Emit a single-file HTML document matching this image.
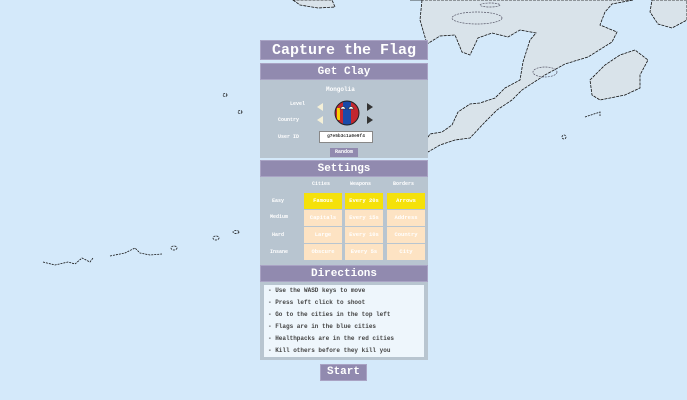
<!DOCTYPE html>
<html><head><style>
*{margin:0;padding:0;box-sizing:border-box}
body{width:687px;height:400px;overflow:hidden;background:#d4e9fa;position:relative;font-family:"Liberation Mono",monospace;font-weight:bold}
svg.map{position:absolute;left:0;top:0}
.abs{position:absolute}
.hdr{position:absolute;left:260px;width:168px;background:#918aaf;color:#fff;text-align:center;border:1px solid #a9a3c4}
.t{font-size:7px;color:#fff;position:absolute}
.cell{position:absolute;width:38px;height:16px;font-size:5.5px;color:#fff;text-align:center;line-height:16px;background:#fde3c3}
.y{background:#f5e10a}
.dir{font-size:6px;color:#444;position:absolute;left:268px}
</style></head><body>
<svg class="map" width="687" height="400">
<g fill="#d9e3ea" stroke="#111" stroke-width="0.8" stroke-dasharray="3,1">
<path d="M293,0 L300,5 L318,8 L335,7 L332,0Z"/>
<path d="M410,0 L422,0 L420,20 L427,44 L440,36 L455,35 L462,52 L470,55 L478,38 L492,33 L508,37 L520,30 L536,33 L530,40 L523,62 L520,80 L505,88 L495,98 L480,103 L470,104 L458,112 L452,125 L442,132 L430,134 L423,145 L428,152 L440,145 L455,140 L470,138 L485,122 L497,110 L512,100 L522,90 L545,75 L565,64 L588,57 L612,42 L617,32 L600,25 L605,12 L612,4 L633,0Z"/>
<path d="M652,0 L687,0 L687,20 L672,28 L658,24 L650,12Z"/>
<path d="M590,80 L605,65 L620,55 L635,50 L648,60 L640,75 L640,88 L625,95 L600,100 L592,95Z"/>
</g>
<g fill="none" stroke="#556" stroke-width="0.7" stroke-dasharray="2,1">
<ellipse cx="477" cy="18" rx="25" ry="6"/><ellipse cx="545" cy="72" rx="12" ry="5"/><ellipse cx="490" cy="5" rx="10" ry="2"/>
</g>
<g fill="none" stroke="#111" stroke-width="0.8" stroke-dasharray="2,1">
<path d="M43,262 L55,265 L68,262 L75,264 L82,258 L90,262 L93,258"/>
<path d="M110,256 L125,253 L135,248 L140,253 L150,255 L162,254"/>
<ellipse cx="174" cy="248" rx="3" ry="2"/><ellipse cx="216" cy="238" rx="3" ry="2"/><ellipse cx="236" cy="232" rx="3" ry="1.5"/>
<ellipse cx="225" cy="95" rx="2" ry="1.5"/><ellipse cx="240" cy="112" rx="2" ry="1.5"/><ellipse cx="564" cy="137" rx="2" ry="2"/>
<path d="M585,117 L600,112 L600,116"/>
</g>
</svg>

<div class="hdr" style="top:40px;height:20px;font-size:15px;line-height:19px">Capture the Flag</div>
<div class="hdr" style="top:63px;height:17px;font-size:11px;line-height:16px">Get Clay</div>
<div class="abs" style="left:260px;top:80px;width:168px;height:78px;background:#b8c5d0"></div>
<div class="t" style="left:326px;top:86px;font-size:6px">Mongolia</div>
<div class="t" style="left:290px;top:101px;font-size:5px">Level</div>
<div class="t" style="left:278px;top:117px;font-size:5px">Country</div>
<div class="t" style="left:278px;top:134px;font-size:5px">User ID</div>
<div class="abs" style="left:317px;top:103px;width:0;height:0;border-top:4px solid transparent;border-bottom:4px solid transparent;border-right:6px solid #f4f0d8"></div>
<div class="abs" style="left:317px;top:116px;width:0;height:0;border-top:4px solid transparent;border-bottom:4px solid transparent;border-right:6px solid #f4f0d8"></div>
<div class="abs" style="left:367px;top:103px;width:0;height:0;border-top:4px solid transparent;border-bottom:4px solid transparent;border-left:6px solid #333"></div>
<div class="abs" style="left:367px;top:116px;width:0;height:0;border-top:4px solid transparent;border-bottom:4px solid transparent;border-left:6px solid #333"></div>
<svg class="abs" style="left:334px;top:100px" width="26" height="26">
<defs><clipPath id="c"><circle cx="13" cy="13" r="12"/></clipPath></defs>
<g clip-path="url(#c)"><rect width="26" height="26" fill="#c4272f"/><rect x="9" width="8" height="26" fill="#1a4aa8"/><rect x="3" y="8" width="3" height="12" fill="#f9cf02"/></g>
<circle cx="13" cy="13" r="12" fill="none" stroke="#222" stroke-width="1"/>
<path d="M6,9 Q9,4 12,9Z M14,9 Q17,4 20,9Z" fill="#fff" stroke="#222" stroke-width="0.6"/>
</svg>
<div class="abs" style="left:319px;top:131px;width:54px;height:12px;background:#fff;border:1px solid #888;font-size:4.5px;color:#333;text-align:center;line-height:10px">g7e5b3c1a0e9f4</div>
<div class="abs" style="left:330px;top:148px;width:28px;height:9px;background:#918aaf;color:#fff;font-size:5px;text-align:center;line-height:9px">Random</div>

<div class="hdr" style="top:160px;height:17px;font-size:11px;line-height:16px">Settings</div>
<div class="abs" style="left:260px;top:177px;width:168px;height:88px;background:#b8c5d0"></div>
<div class="t" style="left:312px;top:181px;font-size:5px">Cities</div>
<div class="t" style="left:350px;top:181px;font-size:5px">Weapons</div>
<div class="t" style="left:393px;top:181px;font-size:5px">Borders</div>
<div class="t" style="left:272px;top:198px;font-size:5px">Easy</div>
<div class="t" style="left:270px;top:214px;font-size:5px">Medium</div>
<div class="t" style="left:272px;top:232px;font-size:5px">Hard</div>
<div class="t" style="left:270px;top:249px;font-size:5px">Insane</div>
<div class="cell y" style="left:304px;top:193px">Famous</div>
<div class="cell y" style="left:345px;top:193px">Every 20s</div>
<div class="cell y" style="left:387px;top:193px">Arrows</div>
<div class="cell" style="left:304px;top:210px">Capitals</div>
<div class="cell" style="left:345px;top:210px">Every 15s</div>
<div class="cell" style="left:387px;top:210px">Address</div>
<div class="cell" style="left:304px;top:227px">Large</div>
<div class="cell" style="left:345px;top:227px">Every 10s</div>
<div class="cell" style="left:387px;top:227px">Country</div>
<div class="cell" style="left:304px;top:244px">Obscure</div>
<div class="cell" style="left:345px;top:244px">Every 5s</div>
<div class="cell" style="left:387px;top:244px">City</div>

<div class="hdr" style="top:265px;height:17px;font-size:11px;line-height:16px">Directions</div>
<div class="abs" style="left:260px;top:282px;width:168px;height:78px;background:#b8c5d0"></div>
<div class="abs" style="left:264px;top:285px;width:160px;height:72px;background:#eef6fc"></div>
<div class="dir" style="top:287px">- Use the WASD keys to move</div>
<div class="dir" style="top:299px">- Press left click to shoot</div>
<div class="dir" style="top:311px">- Go to the cities in the top left</div>
<div class="dir" style="top:323px">- Flags are in the blue cities</div>
<div class="dir" style="top:335px">- Healthpacks are in the red cities</div>
<div class="dir" style="top:347px">- Kill others before they kill you</div>

<div class="abs" style="left:320px;top:364px;width:47px;height:17px;background:#918aaf;border:1px solid #a9a3c4;color:#fff;font-size:11px;text-align:center;line-height:15px">Start</div>
</body></html>
